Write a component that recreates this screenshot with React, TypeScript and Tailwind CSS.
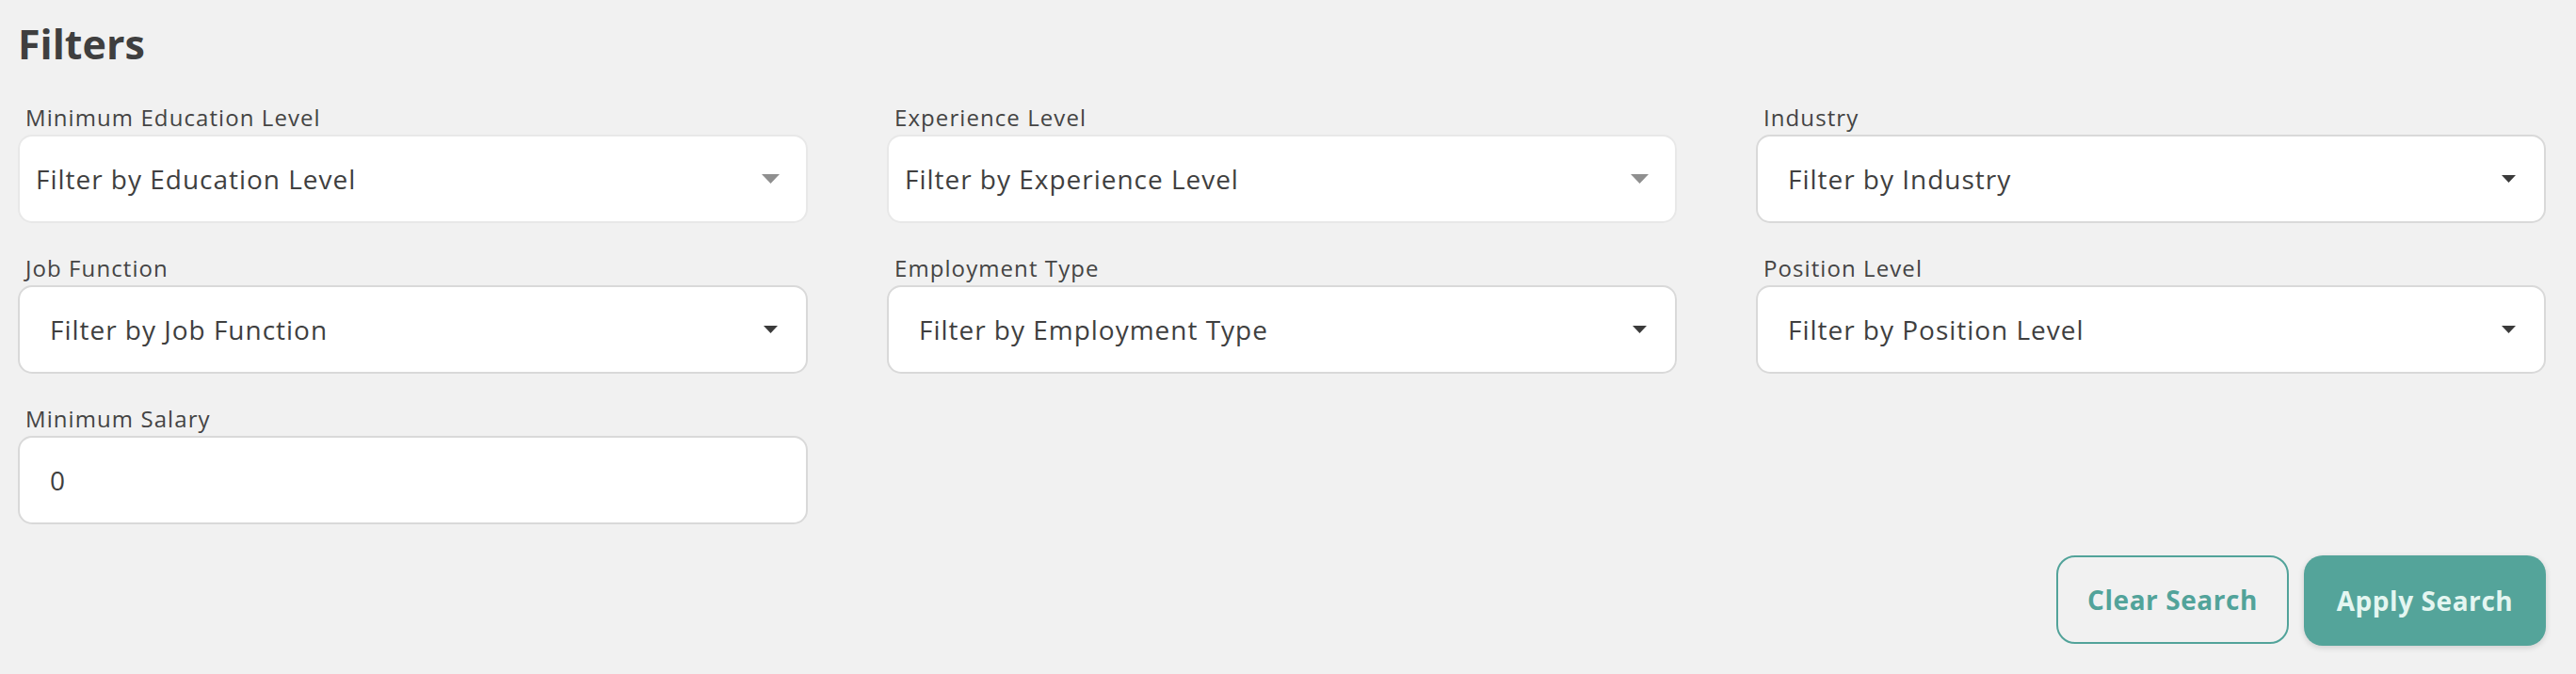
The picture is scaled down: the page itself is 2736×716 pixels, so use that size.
import React from "react";

const font = { fontFamily: '"Open Sans", "Noto Sans", sans-serif' };

function Arrow({ light }: { light?: boolean }) {
  if (light) {
    return (
      <svg width="19" height="10" viewBox="0 0 19 10" className="shrink-0">
        <path d="M0 0 L19 0 L9.5 10 Z" fill="#8f8f8f" />
      </svg>
    );
  }
  return (
    <svg width="15" height="8" viewBox="0 0 15 8" className="shrink-0">
      <path d="M0 0 L15 0 L7.5 8 Z" fill="#3a3a3a" />
    </svg>
  );
}

function SelectField({
  label,
  placeholder,
  light,
}: {
  label: string;
  placeholder: string;
  light?: boolean;
}) {
  return (
    <div className="flex flex-col">
      <label className="pl-[8px] text-[24px] leading-[30px] tracking-[0.045em] text-[#444444] mb-[3px]">
        {label}
      </label>
      <div
        className={
          light
            ? "flex h-[94px] items-center justify-between rounded-[15px] border-2 border-[#e8e8e8] bg-white pl-[17px] pr-[28px]"
            : "flex h-[94px] items-center justify-between rounded-[15px] border-2 border-[#d9d9d9] bg-white pl-[32px] pr-[30px]"
        }
      >
        <span className="text-[28px] tracking-[0.035em] text-[#3f3f3f]">{placeholder}</span>
        <Arrow light={light} />
      </div>
    </div>
  );
}

export default function App() {
  return (
    <div className="min-h-[716px] w-full bg-[#f1f1f1] pl-[19px] pr-[32px] pt-[26px]" style={font}>
      <h1 className="pl-[0px] text-[43px] font-bold leading-[42px] text-[#3f3f3f]">Filters</h1>
      <div className="mt-[42px] grid grid-cols-3 gap-x-[84px] gap-y-[33px]">
        <SelectField label="Minimum Education Level" placeholder="Filter by Education Level" light />
        <SelectField label="Experience Level" placeholder="Filter by Experience Level" light />
        <SelectField label="Industry" placeholder="Filter by Industry" />
        <SelectField label="Job Function" placeholder="Filter by Job Function" />
        <SelectField label="Employment Type" placeholder="Filter by Employment Type" />
        <SelectField label="Position Level" placeholder="Filter by Position Level" />
        <div className="flex flex-col">
          <label className="pl-[8px] text-[24px] leading-[30px] tracking-[0.045em] text-[#444444] mb-[3px]">
            Minimum Salary
          </label>
          <div className="flex h-[94px] items-center rounded-[15px] border-2 border-[#d9d9d9] bg-white pl-[32px]">
            <span className="text-[28px] text-[#3f3f3f]">0</span>
          </div>
        </div>
      </div>
      <div className="mt-[33px] flex justify-end gap-[16px]">
        <button className="flex h-[94px] w-[247px] items-center justify-center rounded-[20px] border-2 border-[#52a39a] text-[28px] font-bold tracking-[0.02em] text-[#52a39a]">
          Clear Search
        </button>
        <button className="flex h-[96px] w-[257px] items-center justify-center rounded-[20px] bg-[#54a49a] text-[28px] font-bold tracking-[0.02em] text-[#e4f6f1] shadow-[0_2px_6px_rgba(0,0,0,0.15)]">
          Apply Search
        </button>
      </div>
    </div>
  );
}
